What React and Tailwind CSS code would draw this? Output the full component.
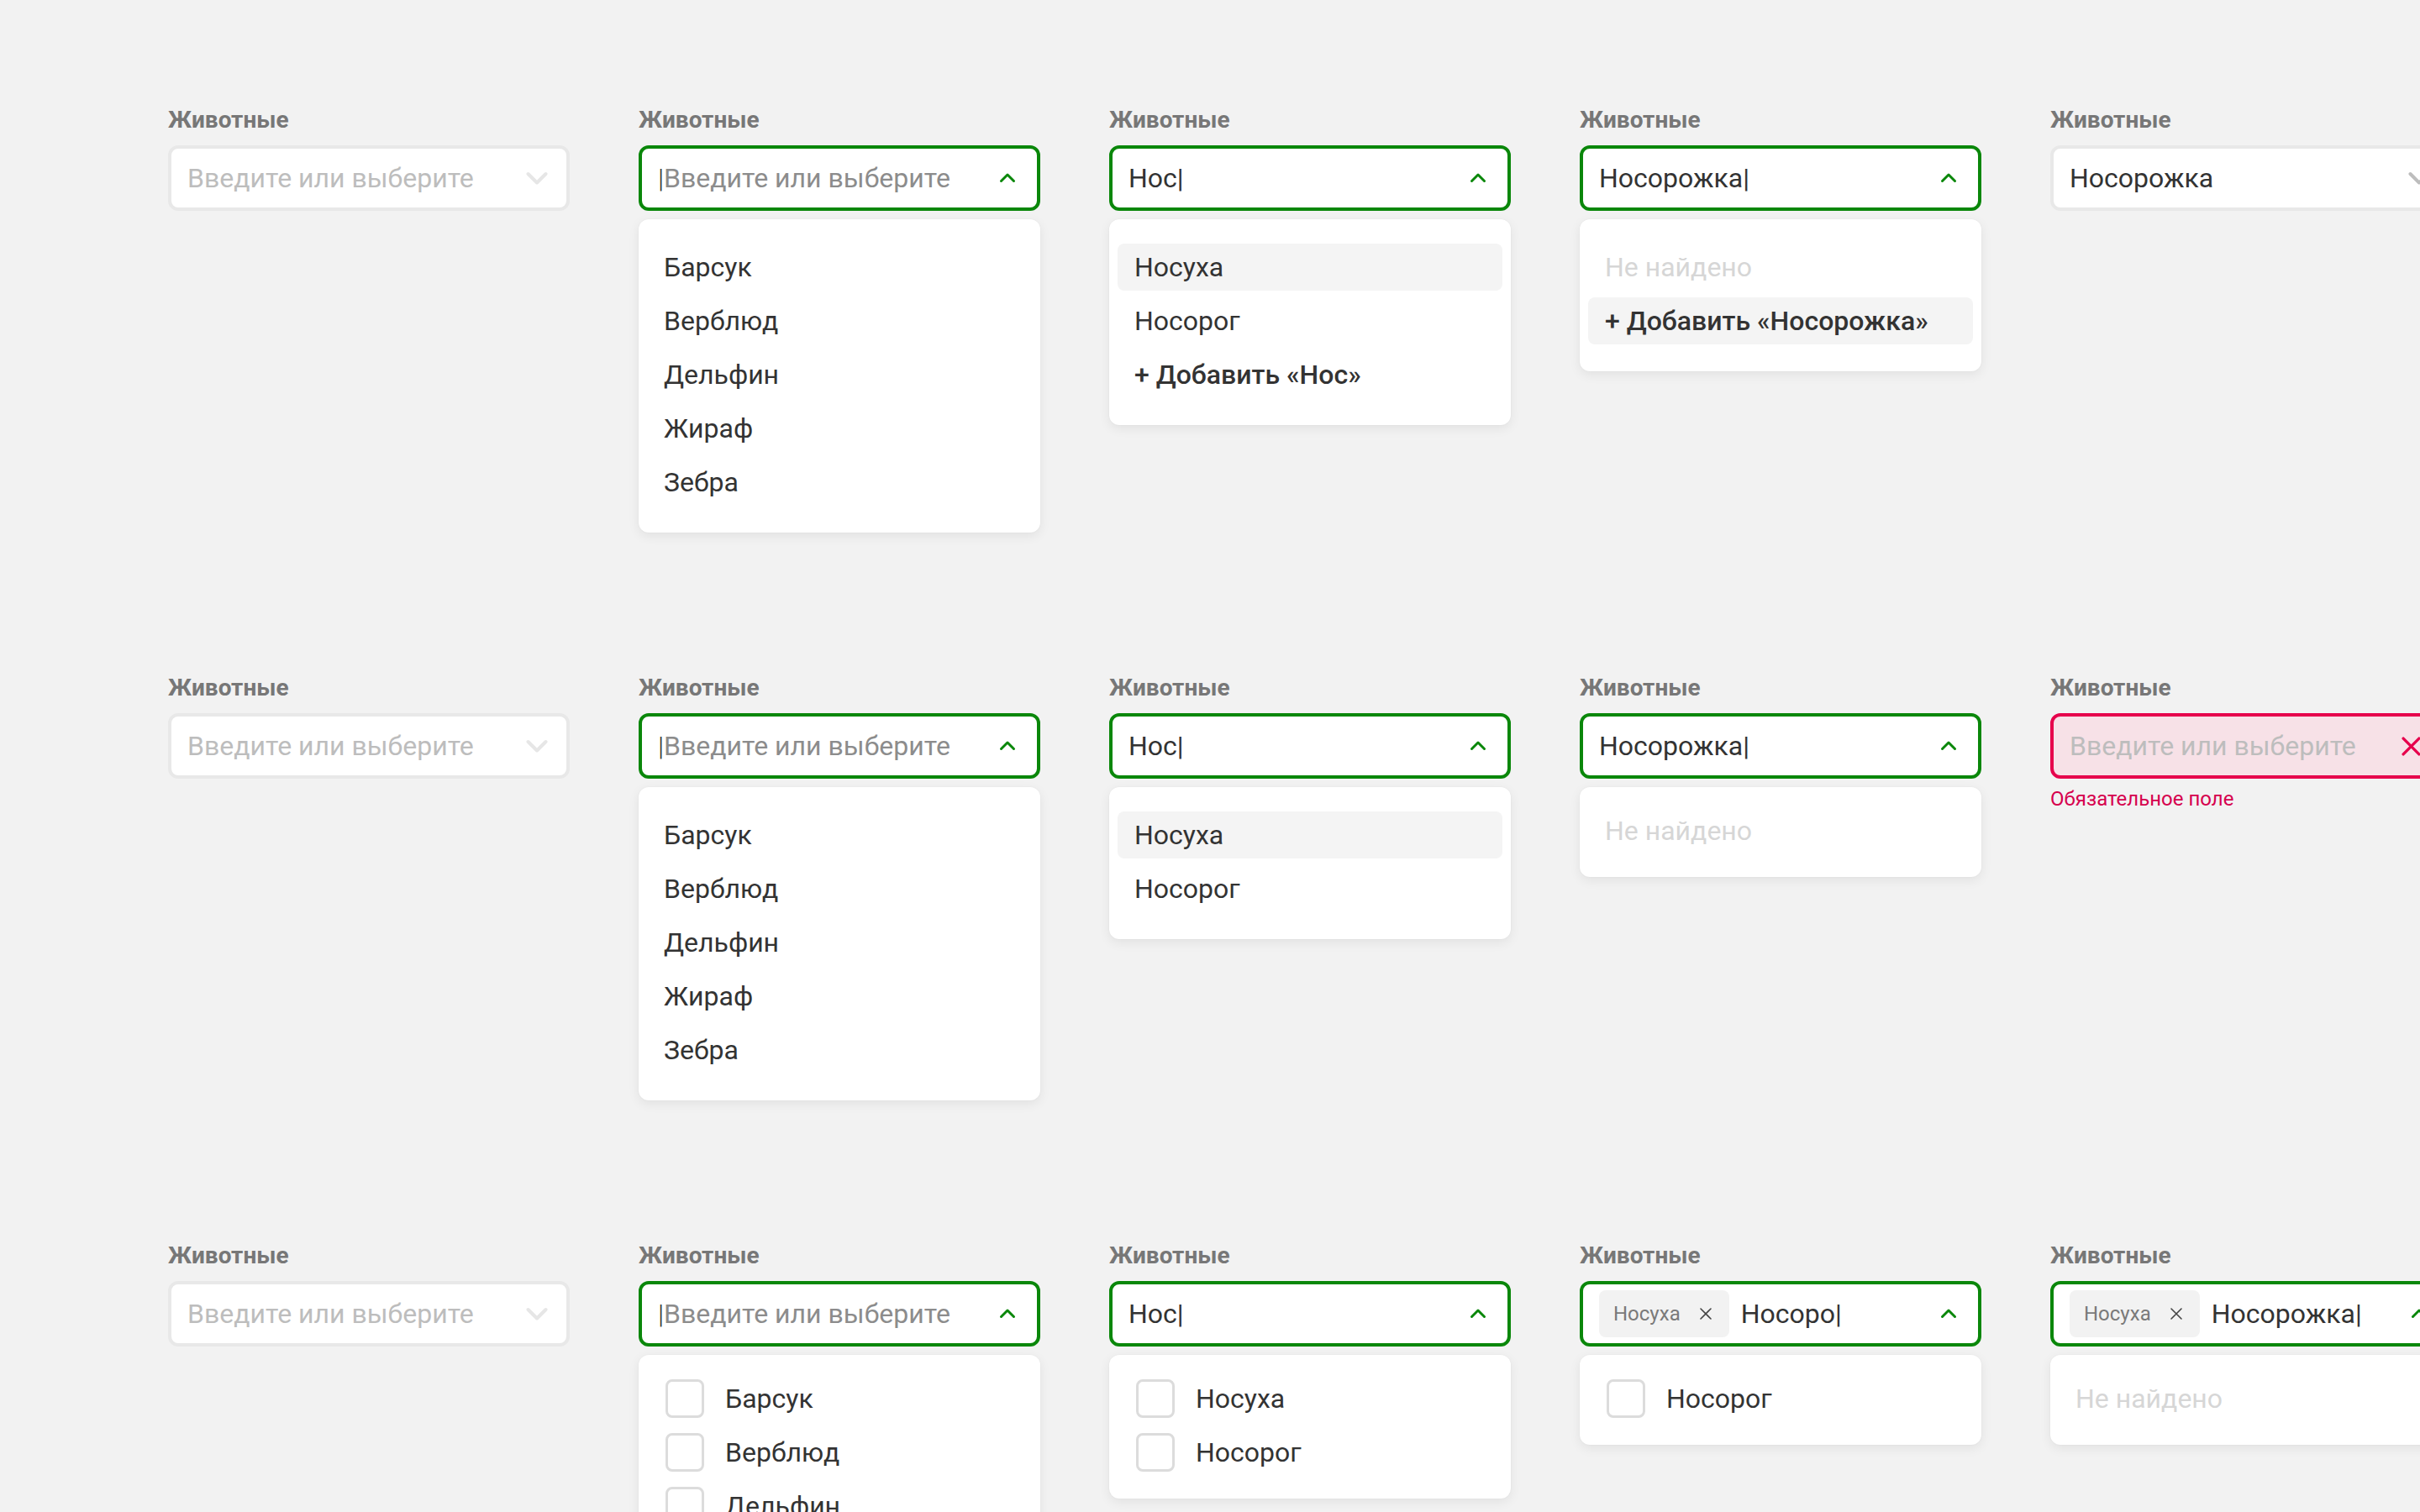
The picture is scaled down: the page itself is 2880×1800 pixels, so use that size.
import React from 'react';

const animals = ['Барсук', 'Верблюд', 'Дельфин', 'Жираф', 'Зебра'];

const rows = [
    [
        { kind: 'disabled' },
        { kind: 'focus', list: animals.map((a) => ({ label: a })) },
        {
            kind: 'focus',
            value: 'Нос|',
            list: [
                { label: 'Носуха', active: true },
                { label: 'Носорог' },
                { label: '+ Добавить «Нос»', add: true },
            ],
        },
        {
            kind: 'focus',
            value: 'Носорожка|',
            list: [
                { label: 'Не найдено', empty: true },
                { label: '+ Добавить «Носорожка»', add: true, active: true },
            ],
        },
        { kind: 'idle', value: 'Носорожка' },
    ],
    [
        { kind: 'disabled' },
        { kind: 'focus', list: animals.map((a) => ({ label: a })) },
        {
            kind: 'focus',
            value: 'Нос|',
            list: [{ label: 'Носуха', active: true }, { label: 'Носорог' }],
        },
        { kind: 'focus', value: 'Носорожка|', compact: true, list: [{ label: 'Не найдено', empty: true }] },
        { kind: 'error', error: 'Обязательное поле' },
    ],
    [
        { kind: 'disabled' },
        { kind: 'focus', compact: true, list: animals.map((a) => ({ label: a, check: true })) },
        {
            kind: 'focus',
            value: 'Нос|',
            compact: true,
            list: [
                { label: 'Носуха', check: true },
                { label: 'Носорог', check: true },
            ],
        },
        {
            kind: 'focus',
            chips: ['Носуха'],
            value: 'Носоро|',
            compact: true,
            list: [{ label: 'Носорог', check: true }],
        },
        {
            kind: 'focus',
            chips: ['Носуха'],
            value: 'Носорожка|',
            compact: true,
            list: [{ label: 'Не найдено', empty: true }],
        },
    ],
];

function Chevron({ up, color }) {
    return (
        <svg width="28" height="16" viewBox="0 0 28 16" fill="none" className="shrink-0">
            {up ? (
                <path d="M6.5 11.5L14 4L21.5 11.5" stroke={color} strokeWidth="3" strokeLinecap="round" strokeLinejoin="round" />
            ) : (
                <path d="M3.5 3L14 13.5L24.5 3" stroke={color} strokeWidth="4" strokeLinecap="round" strokeLinejoin="round" />
            )}
        </svg>
    );
}

function Cross({ size, color, width }) {
    return (
        <svg width={size} height={size} viewBox="0 0 24 24" fill="none" className="shrink-0">
            <path d="M3 3L21 21M21 3L3 21" stroke={color} strokeWidth={width} strokeLinecap="round" />
        </svg>
    );
}

const boxStyles = {
    disabled: 'border-[#e8e8e8] bg-white',
    idle: 'border-[#e8e8e8] bg-white',
    focus: 'border-[#0a870a] bg-white',
    error: 'border-[#e6004c] bg-[#f7e1e7]',
};

function Field({ kind, value, chips, list, error, compact }) {
    return (
        <div className="w-[478px] shrink-0 flex flex-col">
            <div className="text-[28px] leading-[32px] font-bold text-[#777777] mt-[2px] mb-[14px]">Животные</div>

            {/* Input */}
            <div
                className={`h-[78px] flex items-center gap-[14px] border-[4px] rounded-[12px] pl-[19px] pr-[21px] ${boxStyles[kind]}`}
            >
                {chips?.map((chip) => (
                    <div
                        key={chip}
                        className="h-[56px] flex items-center gap-[22px] pl-[17px] pr-[20px] rounded-[8px] bg-[#f2f2f2] text-[24px] text-[#7a7a7a] shrink-0"
                    >
                        {chip}
                        <Cross size={16} color="#444444" width={2.4} />
                    </div>
                ))}
                <div className="flex-1 min-w-0 text-[32px] leading-none whitespace-nowrap">
                    {value ? (
                        <span className="text-[#333333]">{value}</span>
                    ) : kind === 'focus' ? (
                        <>
                            <span className="text-[#333333] font-light">|</span>
                            <span className="text-[#8c8c8c]">Введите или выберите</span>
                        </>
                    ) : (
                        <span className="text-[#bdbdbd]">Введите или выберите</span>
                    )}
                </div>
                {kind === 'focus' && <Chevron up color="#0a870a" />}
                {kind === 'disabled' && <Chevron color="#e6e6e6" />}
                {kind === 'idle' && <Chevron color="#bdbdbd" />}
                {kind === 'error' && (
                    <div className="mr-[11px]">
                        <Cross size={25} color="#e6004c" width={3.2} />
                    </div>
                )}
            </div>

            {error && <div className="mt-[10px] text-[24px] leading-[28px] text-[#d6004e]">{error}</div>}

            {/* Dropdown */}
            {list && (
                <div
                    className={`mt-[10px] rounded-[12px] bg-white px-[10px] flex flex-col gap-2 shadow-[0_4px_14px_rgba(0,0,0,0.07),0_0_2px_rgba(0,0,0,0.05)] ${
                        compact ? 'pt-[24px] pb-[27px]' : 'pt-[29px] pb-[32px]'
                    }`}
                >
                    {list.map((item) => (
                        <div
                            key={item.label}
                            className={`h-[56px] shrink-0 flex items-center gap-[25px] pr-[20px] rounded-[8px] text-[32px] leading-none whitespace-nowrap ${
                                item.check ? 'pl-[22px]' : 'pl-[20px]'
                            } ${item.active ? 'bg-[#f4f4f4]' : ''} ${item.empty ? 'text-[#d6d6d6]' : 'text-[#333333]'} ${
                                item.add ? 'font-medium' : ''
                            }`}
                        >
                            {item.check && (
                                <div className="w-[46px] h-[46px] shrink-0 rounded-[8px] border-[3px] border-[#dcdcdc] bg-white" />
                            )}
                            {item.label}
                        </div>
                    ))}
                </div>
            )}
        </div>
    );
}

export default function App() {
    return (
        <div className="w-[2880px] h-[1800px] overflow-hidden bg-[#f2f2f2] pt-[125px] pl-[200px] font-['Roboto',sans-serif]">
            {rows.map((row, i) => (
                <div key={i} className="h-[676px] flex items-start gap-[82px]">
                    {row.map((field, j) => (
                        <Field key={j} {...field} />
                    ))}
                </div>
            ))}
        </div>
    );
}
